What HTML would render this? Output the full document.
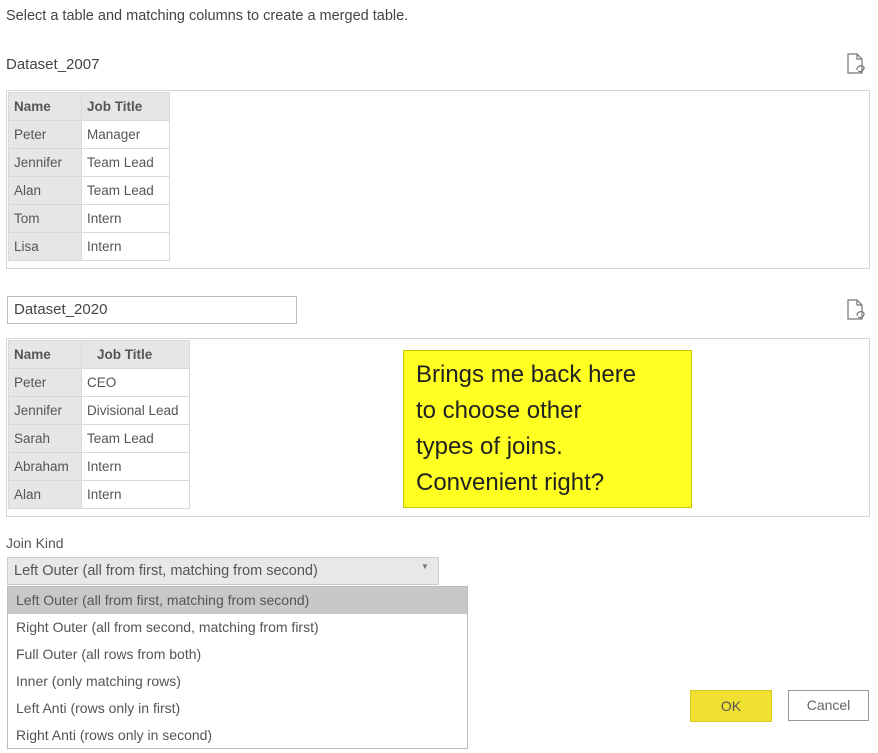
<!DOCTYPE html>
<html><head><meta charset="utf-8"><style>
body{margin:0;width:878px;height:753px;background:#fff;font-family:"Liberation Sans",sans-serif;color:#555;position:relative;overflow:hidden}
.a{position:absolute}
.t{font-size:14px}
.box{position:absolute;border:1px solid #d4d4d4;background:#fff}
table{border-collapse:collapse;position:absolute;font-size:13.5px}
td{height:27px;padding:0 0 0 5px;border:1px solid #d8d8d8;white-space:nowrap}
td.n{background:#e6e6e6;color:#555}
tr.h td{background:#e6e6e6;font-weight:bold;color:#555}
.opt{height:27px;line-height:27px;padding-left:8px;font-size:14px;color:#555}
</style></head><body>
<div class="a t" style="left:6px;top:8px;font-size:14.5px;color:#444">Select a table and matching columns to create a merged table.</div>
<div class="a t" style="left:6px;top:56px;font-size:15px;color:#444">Dataset_2007</div>
<svg class="a" style="left:846px;top:52px" width="22" height="24" viewBox="0 0 22 24"><path d="M2 2h9l5 5v14H2z M11 2v5h5" fill="none" stroke="#777" stroke-width="1.2"/><path d="M11 18a4 4 0 0 1 7-3M18 15a4 4 0 0 1-6 4" fill="none" stroke="#777" stroke-width="1.2"/></svg>
<div class="box" style="left:6px;top:90px;width:862px;height:177px"></div>
<table style="left:8px;top:92px;width:162px">
<tr class="h"><td style="width:67px">Name</td><td>Job Title</td></tr>
<tr><td class="n">Peter</td><td>Manager</td></tr>
<tr><td class="n">Jennifer</td><td>Team Lead</td></tr>
<tr><td class="n">Alan</td><td>Team Lead</td></tr>
<tr><td class="n">Tom</td><td>Intern</td></tr>
<tr><td class="n">Lisa</td><td>Intern</td></tr>
</table>
<div class="box" style="left:7px;top:296px;width:288px;height:26px;border-color:#bbb"></div>
<div class="a" style="left:14px;top:301px;font-size:15px;color:#444">Dataset_2020</div>
<svg class="a" style="left:846px;top:298px" width="22" height="24" viewBox="0 0 22 24"><path d="M2 2h9l5 5v14H2z M11 2v5h5" fill="none" stroke="#777" stroke-width="1.2"/><path d="M11 18a4 4 0 0 1 7-3M18 15a4 4 0 0 1-6 4" fill="none" stroke="#777" stroke-width="1.2"/></svg>
<div class="box" style="left:6px;top:338px;width:862px;height:177px"></div>
<table style="left:8px;top:340px;width:182px">
<tr class="h"><td style="width:67px">Name</td><td style="padding-left:15px">Job Title</td></tr>
<tr><td class="n">Peter</td><td>CEO</td></tr>
<tr><td class="n">Jennifer</td><td>Divisional Lead</td></tr>
<tr><td class="n">Sarah</td><td>Team Lead</td></tr>
<tr><td class="n">Abraham</td><td>Intern</td></tr>
<tr><td class="n">Alan</td><td>Intern</td></tr>
</table>
<div class="a" style="left:403px;top:350px;width:275px;height:150px;background:#ffff22;border:1px solid #c8c800;padding:6px 0 0 12px;font-size:24px;line-height:36px;color:#222">Brings me back here<br>to choose other<br>types of joins.<br>Convenient right?</div>
<div class="a t" style="left:6px;top:535px;color:#555">Join Kind</div>
<div class="a" style="left:7px;top:557px;width:430px;height:26px;background:#e8e8e8;border:1px solid #ccc"></div>
<div class="a" style="left:14px;top:563px;font-size:14.5px;color:#555">Left Outer (all from first, matching from second)</div>
<div class="a" style="left:421px;top:562px;font-size:8px;color:#777">▼</div>
<div class="a" style="left:7px;top:586px;width:459px;height:161px;border:1px solid #bbb;background:#fff">
<div class="opt" style="background:#c8c8c8">Left Outer (all from first, matching from second)</div>
<div class="opt">Right Outer (all from second, matching from first)</div>
<div class="opt">Full Outer (all rows from both)</div>
<div class="opt">Inner (only matching rows)</div>
<div class="opt">Left Anti (rows only in first)</div>
<div class="opt">Right Anti (rows only in second)</div>
</div>
<div class="a" style="left:690px;top:690px;width:80px;height:30px;background:#f0e030;border:1px solid #d8c820;text-align:center;line-height:30px;font-size:14px;color:#555">OK</div>
<div class="a" style="left:788px;top:690px;width:79px;height:29px;background:#fff;border:1px solid #999;text-align:center;line-height:29px;font-size:14px;color:#666">Cancel</div>
</body></html>
